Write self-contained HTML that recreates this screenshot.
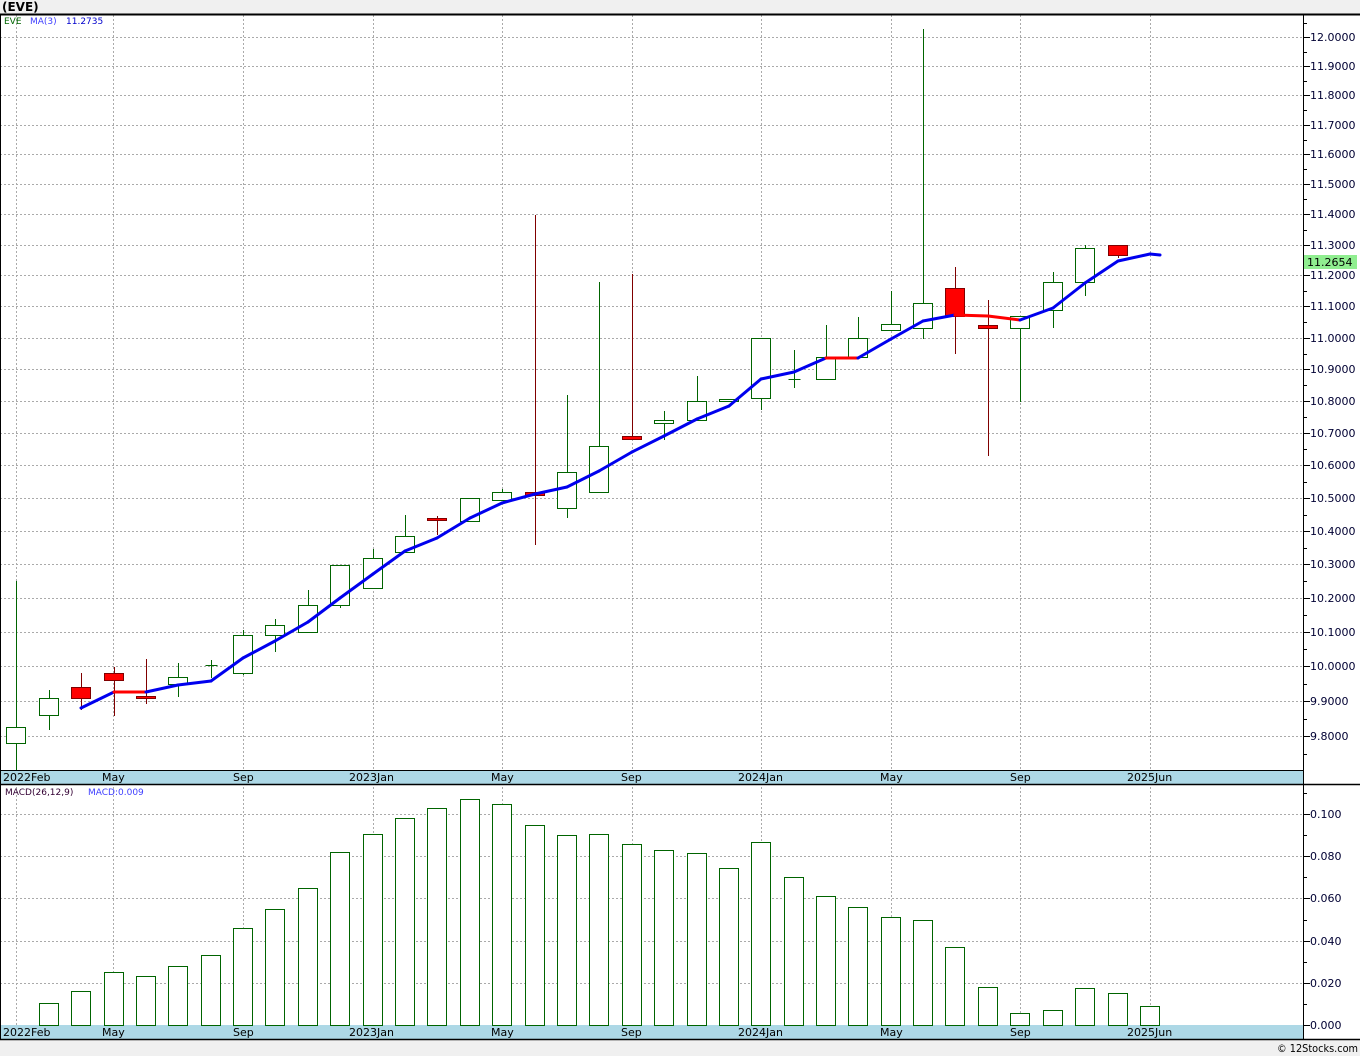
<!DOCTYPE html>
<html><head><meta charset="utf-8">
<style>
html,body{margin:0;padding:0;background:#f0f0f0;}
body{width:1360px;height:1056px;overflow:hidden;position:relative;font-family:"DejaVu Sans","Liberation Sans",sans-serif;}
svg text{font-family:"DejaVu Sans","Liberation Sans",sans-serif;}
</style></head><body>
<svg id="s" width="1360" height="1056" xmlns="http://www.w3.org/2000/svg" style="position:absolute;left:0;top:0">
<rect x="0" y="0" width="1360" height="1056" fill="#f0f0f0"/>
<text x="2" y="11" font-size="12" font-weight="bold" fill="#000">(EVE)</text>
<rect x="0" y="14" width="1360" height="1026" fill="#fff"/>
<g id="grid"></g>
<rect x="0" y="770" width="1303" height="14" fill="#add8e6"/>
<rect x="0" y="1025" width="1303" height="14" fill="#add8e6"/>
<g id="bars"></g>
<g id="cand"></g>
<g id="ma"></g>
<line x1="0" y1="14.5" x2="1360" y2="14.5" stroke="#000" stroke-width="2"/>
<line x1="0.5" y1="14" x2="0.5" y2="1040" stroke="#000"/>
<line x1="1303.5" y1="14" x2="1303.5" y2="1040" stroke="#000"/>
<line x1="0" y1="770.5" x2="1303" y2="770.5" stroke="#000"/>
<line x1="0" y1="784.5" x2="1360" y2="784.5" stroke="#000" stroke-width="1.5"/>
<line x1="0" y1="1039.5" x2="1360" y2="1039.5" stroke="#000" stroke-width="1.5"/>
<g id="ticks"></g>
<g font-size="11" fill="#000">
<text x="3" y="781">2022Feb</text><text x="102" y="781">May</text><text x="233" y="781">Sep</text><text x="349" y="781">2023Jan</text><text x="491" y="781">May</text><text x="621" y="781">Sep</text><text x="738" y="781">2024Jan</text><text x="880" y="781">May</text><text x="1010" y="781">Sep</text><text x="1127" y="781">2025Jun</text>
<text x="3" y="1036">2022Feb</text><text x="102" y="1036">May</text><text x="233" y="1036">Sep</text><text x="349" y="1036">2023Jan</text><text x="491" y="1036">May</text><text x="621" y="1036">Sep</text><text x="738" y="1036">2024Jan</text><text x="880" y="1036">May</text><text x="1010" y="1036">Sep</text><text x="1127" y="1036">2025Jun</text>
</g>
<g font-size="11" fill="#000033">
<text x="1310" y="41">12.0000</text><text x="1310" y="70">11.9000</text><text x="1310" y="99">11.8000</text><text x="1310" y="129">11.7000</text><text x="1310" y="158">11.6000</text><text x="1310" y="188">11.5000</text><text x="1310" y="218">11.4000</text><text x="1310" y="249">11.3000</text>
<text x="1310" y="279">11.2000</text><text x="1310" y="310">11.1000</text><text x="1310" y="342">11.0000</text><text x="1310" y="373">10.9000</text><text x="1310" y="405">10.8000</text><text x="1310" y="437">10.7000</text><text x="1310" y="469">10.6000</text><text x="1310" y="502">10.5000</text><text x="1310" y="535">10.4000</text><text x="1310" y="568">10.3000</text><text x="1310" y="602">10.2000</text><text x="1310" y="636">10.1000</text><text x="1310" y="670">10.0000</text><text x="1310" y="705">9.9000</text><text x="1310" y="740">9.8000</text>
<text x="1310" y="818">0.100</text><text x="1310" y="860">0.080</text><text x="1310" y="902">0.060</text><text x="1310" y="945">0.040</text><text x="1310" y="987">0.020</text><text x="1310" y="1029">0.000</text>
</g>
<rect x="1304" y="255" width="53" height="14" fill="#90ee90"/>
<text x="1307" y="266" font-size="11" fill="#000">11.2654</text>
<text x="4" y="24" font-size="9" fill="#006400">EVE</text>
<text x="30" y="24" font-size="9" fill="#4040ff">MA(3)</text>
<text x="66" y="24" font-size="9" fill="#0000cc">11.2735</text>
<text x="5" y="795" font-size="9" fill="#330033">MACD(26,12,9)</text>
<text x="88" y="795" font-size="9" fill="#4040ff">MACD:0.009</text>
<text x="1277" y="1052" font-size="11" fill="#000" textLength="81" lengthAdjust="spacingAndGlyphs">© 12Stocks.com</text>
</svg>
<script>
var ns="http://www.w3.org/2000/svg";
function el(p,t,a){var e=document.createElementNS(ns,t);for(var k in a)e.setAttribute(k,a[k]);document.getElementById(p).appendChild(e);return e;}
[16,113,243,373,502,632,761,891,1020,1150].forEach(function(x){
 el('grid','line',{x1:x+.5,y1:15,x2:x+.5,y2:1025,stroke:'#aaa','stroke-dasharray':'2,2'});});
var PY=[37,66,95,125,154,184,214,245,275,306,338,369,401,433,465,498,531,564,598,632,666,701,736];
PY.forEach(function(v,i){var y=v+.5;el('grid','line',{x1:0,y1:y,x2:1303,y2:y,stroke:'#aaa','stroke-dasharray':'2,2'});
 el('ticks','line',{x1:1303,y1:y,x2:1310,y2:y,stroke:'#000'});
 var pv=i>0?PY[i-1]:v-29;var m=Math.round((v+pv)/2)+.5;
 el('ticks','line',{x1:1303,y1:m,x2:1307,y2:m,stroke:'#000'});});
el('ticks','line',{x1:1303,y1:754.5,x2:1307,y2:754.5,stroke:'#000'});
for(var i=0;i<6;i++){var y=Math.round(814+i*42.2)+.5;el('grid','line',{x1:0,y1:y,x2:1303,y2:y,stroke:'#aaa','stroke-dasharray':'2,2'});
 el('ticks','line',{x1:1303,y1:y,x2:1310,y2:y,stroke:'#000'});
 el('ticks','line',{x1:1303,y1:y-21,x2:1307,y2:y-21,stroke:'#000'});}
var C=[[16,727,743,581,770,0],[49,698,715,690,730,0],[81,687,698,673,710,1],[114,673,680,667,716,1],[146,696,698,659,704,1],[178,677,684,663,697,0],[211,665,665,660,678,0],[243,635,673,630,675,0],[275,625,635,619,652,0],[308,605,632,590,632,0],[340,565,605,565,608,0],[373,558,588,549,588,0],[405,536,552,515,552,0],[437,518,520,516,535,1],[470,498,521,498,522,0],[502,492,500,489,500,0],[535,492,495,215,545,1],[567,472,508,395,518,0],[599,446,492,282,492,0],[632,436,439,274,439,1],[664,420,423,411,440,0],[697,401,420,376,420,0],[729,399,401,399,402,0],[761,338,398,338,410,0],[794,379,379,350,388,0],[826,357,379,325,379,0],[858,338,357,317,357,0],[891,324,330,291,330,0],[923,303,328,29,339,0],[955,288,316,267,354,1],[988,325,328,300,456,1],[1020,316,328,316,402,0],[1053,282,310,272,328,0],[1085,248,282,245,296,0],[1118,245,255,245,258,1]];
C.forEach(function(c){var x=c[0]+.5,col=c[5]?'#800000':'#006400';
 el('cand','line',{x1:x,y1:c[3],x2:x,y2:c[4],stroke:col});
 if(c[2]-c[1]<1){el('cand','line',{x1:x-6,y1:c[1]+.5,x2:x+6,y2:c[1]+.5,stroke:col});}
 else el('cand','rect',{x:c[0]-9.5,y:c[1]+.5,width:19,height:c[2]-c[1],fill:c[5]?'#ff0000':'#fff',stroke:col});});
var M=[[81,708],[114,692],[146,692],[178,685],[211,681],[243,658],[275,641],[308,622],[340,598],[373,574],[405,551],[437,538],[470,518],[502,503],[535,494],[567,487],[599,471],[632,452],[664,436],[697,419],[729,406],[761,379],[794,372],[826,358],[858,358],[891,339],[923,321],[955,315],[988,316],[1020,320],[1053,308],[1085,283],[1118,261],[1150,254],[1160,255]];
for(var i=1;i<M.length;i++){var red=M[i][1]>=M[i-1][1]&&i<M.length-1;
 el('ma','line',{x1:M[i-1][0],y1:M[i-1][1],x2:M[i][0],y2:M[i][1],stroke:red?'#ff0000':'#0000ee','stroke-width':3,'stroke-linecap':'round'});}
var B=[[49,1003],[81,991],[114,972],[146,976],[178,966],[211,955],[243,928],[275,909],[308,888],[340,852],[373,834],[405,818],[437,808],[470,799],[502,804],[535,825],[567,835],[599,834],[632,844],[664,850],[697,853],[729,868],[761,842],[794,877],[826,896],[858,907],[891,917],[923,920],[955,947],[988,987],[1020,1013],[1053,1010],[1085,988],[1118,993],[1150,1006]];
B.forEach(function(b){el('bars','rect',{x:b[0]-9.5,y:b[1]+.5,width:19,height:1025-b[1],fill:'#fff',stroke:'#006400'});});
</script>
</body></html>
